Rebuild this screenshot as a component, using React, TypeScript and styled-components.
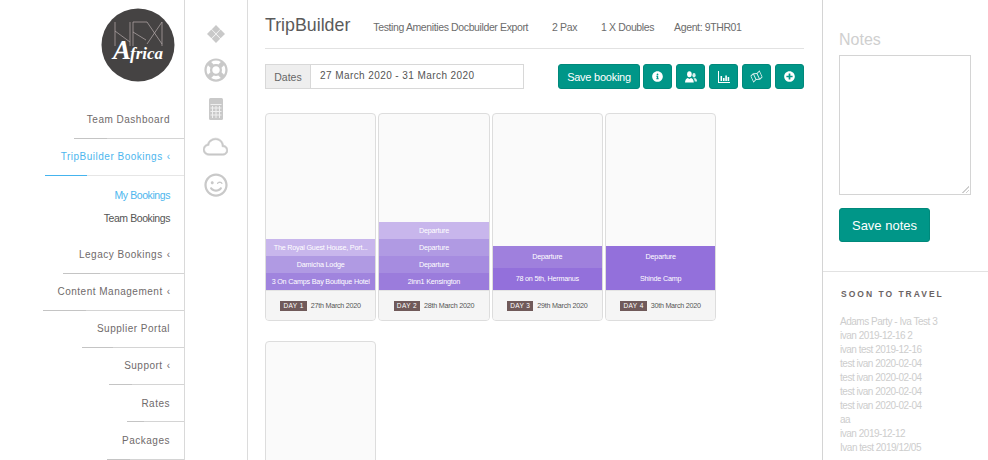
import React from 'react';
import styled, { createGlobalStyle } from 'styled-components';
import { FaInfoCircle, FaPlusCircle, FaRegLifeRing, FaRegMap, FaRegSmileWink } from 'react-icons/fa';
import { BsCloud } from 'react-icons/bs';

const Global = createGlobalStyle`
  html, body { margin: 0; padding: 0; background: #fff; }
  body { font-family: "Liberation Sans", Arial, sans-serif; overflow: hidden; }
  * { box-sizing: border-box; }
`;

const Page = styled.div`
  display: flex;
  width: 988px;
  height: 460px;
  overflow: hidden;
`;

const Sidebar = styled.aside`
  width: 185px;
  flex: none;
  border-right: 1px solid #d9d9d9;
  padding-top: 8px;
`;

const LogoWrap = styled.div`
  display: flex;
  justify-content: flex-end;
  padding-right: 9px;
  height: 93.5px;
`;

const NavList = styled.nav`
  display: flex;
  flex-direction: column;
`;

const NavItem = styled.div`
  height: 36.2px;
  padding: 11.5px 14px 0 0;
  font-size: 10px;
  line-height: 13px;
  letter-spacing: 0.5px;
  color: ${p => (p.$active ? '#4db6ee' : '#6f6a6a')};
  display: flex;
  justify-content: flex-end;
  gap: 4px;
`;

const Chevron = styled.span`
  letter-spacing: 0;
`;

const Rule = styled.div`
  height: 1px;
  background: ${p => (p.$active ? '#e6e6e6' : '#d4d4d4')};
  margin-left: ${p => p.$start}px;
  display: flex;
`;

const RuleLead = styled.span`
  display: block;
  height: 1px;
  width: ${p => p.$width}px;
  background: ${p => (p.$active ? '#45b4ee' : '#c4c4c4')};
`;

const SubNav = styled.div`
  display: flex;
  flex-direction: column;
  height: 60.5px;
  padding: 13px 14px 0 0;
  gap: 10px;
`;

const SubItem = styled.div`
  text-align: right;
  font-size: 10.5px;
  letter-spacing: -0.42px;
  line-height: 13px;
  color: ${p => (p.$active ? '#4db6ee' : '#555')};
`;

const IconRail = styled.div`
  width: 63px;
  flex: none;
  border-right: 1px solid #dcdcdc;
  display: flex;
  flex-direction: column;
  align-items: center;
  padding: 25px 1px 0 0;
  color: #c9c9c9;
`;

const RailSlot = styled.div`
  height: ${p => p.$height}px;
  margin-top: ${p => p.$top}px;
  display: flex;
  align-items: center;
  justify-content: center;
`;

const Main = styled.main`
  width: 575px;
  flex: none;
  padding: 0 18px 0 17px;
  border-right: 1px solid #d4d4d4;
`;

const Header = styled.header`
  height: 49px;
  display: flex;
  align-items: baseline;
  border-bottom: 1px solid #e2e2e2;
  padding-top: 15px;
  color: #6c6c6c;
  font-size: 10.5px;
  letter-spacing: -0.38px;
`;

const Title = styled.h1`
  margin: 0 23px 0 0;
  font-size: 17.8px;
  line-height: 20px;
  font-weight: 400;
  letter-spacing: 0;
  color: #5a5a5a;
`;

const Meta = styled.span`
  margin-right: ${p => p.$gap}px;
`;

const Toolbar = styled.div`
  display: flex;
  justify-content: space-between;
  margin-top: 15px;
  height: 25px;
`;

const DateGroup = styled.div`
  display: flex;
  width: 259px;
  height: 25px;
  border: 1px solid #d8d8d8;
`;

const DateLabel = styled.div`
  width: 45px;
  background: #eee;
  border-right: 1px solid #d8d8d8;
  font-size: 10.5px;
  color: #666;
  display: flex;
  align-items: center;
  justify-content: center;
`;

const DateValue = styled.div`
  flex: 1;
  padding-left: 9px;
  font-size: 10px;
  letter-spacing: 0.42px;
  line-height: 21px;
  color: #555;
`;

const Actions = styled.div`
  display: flex;
  gap: 4px;
`;

const ActionButton = styled.button`
  height: 25px;
  width: ${p => (p.$wide ? '82px' : '29px')};
  margin-right: ${p => (p.$wide ? '-1px' : '0')};
  padding: 0;
  border: 1px solid #00897b;
  border-radius: 3px;
  background: #009688;
  color: #fff;
  font-family: inherit;
  font-size: 11px;
  letter-spacing: -0.25px;
  display: flex;
  align-items: center;
  justify-content: center;
`;

const TiltedIcon = styled.span`
  display: flex;
  transform: rotate(-25deg);
  opacity: 0.85;
`;

const Grid = styled.div`
  display: grid;
  grid-template-columns: repeat(4, 111.33px);
  column-gap: 2px;
  row-gap: 20px;
  margin-top: 24px;
`;

const Card = styled.div`
  height: 208px;
  border: 1px solid #ddd;
  border-radius: 4px;
  background: #fafafa;
  display: flex;
  flex-direction: column;
  overflow: hidden;
`;

const Stack = styled.div`
  flex: 1;
  display: flex;
  flex-direction: column;
  justify-content: flex-end;
`;

const Stay = styled.div`
  height: ${p => p.$height}px;
  background: ${p => p.$color};
  color: #fff;
  font-size: 7.2px;
  letter-spacing: -0.2px;
  text-align: center;
  line-height: ${p => p.$line}px;
  white-space: nowrap;
`;

const CardFoot = styled.div`
  height: 30px;
  flex: none;
  background: #f5f5f5;
  border-top: 1px solid #e4e4e4;
  display: flex;
  align-items: center;
  justify-content: center;
  gap: 4px;
  font-size: 7.2px;
  letter-spacing: -0.25px;
  color: #555;
`;

const DayBadge = styled.span`
  background: #705a5a;
  color: #fff;
  font-size: 6.5px;
  line-height: 10px;
  padding: 0 3px;
  letter-spacing: 0.4px;
`;

const Aside = styled.aside`
  flex: 1;
  min-width: 0;
`;

const NotesBlock = styled.section`
  height: 272px;
  padding: 30px 17px 0 16px;
  border-bottom: 1px solid #e2e2e2;
`;

const NotesTitle = styled.h2`
  margin: 0 0 6px;
  font-size: 16px;
  line-height: 19px;
  font-weight: 400;
  color: #cfcfcf;
`;

const NotesArea = styled.textarea`
  display: block;
  width: 132px;
  height: 140px;
  border: 1px solid #d4d4d4;
  background: #fff;
  padding: 0;
  margin: 0;
  outline: none;
  &::-webkit-resizer {
    background: linear-gradient(135deg, transparent 0 50%, #cfcfcf 50% 60%, transparent 60% 75%, #cfcfcf 75% 85%, transparent 85%) right 1px bottom 1px / 7px 7px no-repeat;
  }
`;

const SaveNotes = styled.button`
  display: block;
  margin-top: 13px;
  width: 91px;
  height: 34px;
  border: 1px solid #00897b;
  border-radius: 3px;
  background: #009688;
  color: #fff;
  font-family: inherit;
  font-size: 13px;
  padding: 0;
`;

const Travel = styled.section`
  padding: 16px 0 0 17px;
`;

const TravelTitle = styled.h3`
  margin: 0 0 15px 1px;
  font-size: 8.5px;
  line-height: 12px;
  font-weight: 700;
  letter-spacing: 2px;
  color: #6b6363;
`;

const TravelList = styled.ul`
  margin: 0;
  padding: 0;
  list-style: none;
  font-size: 10px;
  letter-spacing: -0.48px;
  line-height: 14.05px;
  color: #cdcdcd;
`;

const Diamonds = () => (
  <svg width="18" height="18" viewBox="0 0 18 18" fill="currentColor">
    <path d="M9 0l4.2 4.2L9 8.4 4.8 4.2zM4.4 4.6L8.6 9l-4.2 4.2L0 9zM13.6 4.6L18 9l-4.4 4.2L9.4 9zM9 9.6l4.2 4.2L9 18l-4.2-4.2z" />
  </svg>
);

const Calculator = () => (
  <svg width="14" height="22" viewBox="0 0 14 22">
    <rect width="14" height="22" rx="1.5" fill="currentColor" />
    <path d="M1.5 6.5h11M1.5 10h11M1.5 13.5h11M1.5 17h11M3.5 8v12M7 8v12M10.5 8v12" stroke="#efefef" strokeWidth="1" />
  </svg>
);

const UsersIcon = () => (
  <svg width="12" height="12" viewBox="0 0 12 12" fill="#fff">
    <ellipse cx="4.4" cy="3.2" rx="2.3" ry="3" />
    <path d="M0 11.5c0-3 1.6-4.2 2.8-4.6l1.6 1 1.6-1C7.2 7.3 8.8 8.5 8.8 11.5z" />
    <ellipse cx="9" cy="4.2" rx="1.6" ry="2.2" opacity="0.85" />
    <path d="M8.3 7.2l.7.4 1-.5c1 .4 2 1.400 2 3.400H9.700c0-1.300-.5-2.600-1.400-3.300z" opacity="0.85" />
  </svg>
);

const BarsIcon = () => (
  <svg width="12" height="12" viewBox="0 0 12 12" fill="#fff">
    <path d="M0 0h1v11h11v1H0z" />
    <path d="M2.500 5h1.600v5H2.500zM5 7h1.600v3H5zM7.300 4.500h1.600V10H7.300zM9.600 6h1.600v4H9.600z" />
  </svg>
);

const Logo = () => (
  <svg width="74" height="74" viewBox="0 0 74 74">
    <circle cx="37" cy="37" r="36.500" fill="#454343" />
    <g stroke="#b8adad" strokeWidth="0.7" fill="none">
      <path d="M14 38V14M14 23l15 11M29 14v24M32 14h14M32 14v24M32 24l13 8M46 14l15 22M61 14L46 36M61 14v24" />
    </g>
    <text x="12" y="51" fontFamily="'Liberation Serif', serif" fontStyle="italic" fontWeight="700" fill="#fff">
      <tspan fontSize="27">A</tspan>
      <tspan fontSize="17" dx="-1">frica</tspan>
    </text>
  </svg>
);

const nav = [
  { label: 'Team Dashboard', start: 74, lead: 33 },
  { label: 'TripBuilder Bookings', start: 45, lead: 42, active: true, more: true, sub: true },
  { label: 'Legacy Bookings', start: 63, lead: 37, more: true },
  { label: 'Content Management', start: 43, lead: 43, more: true },
  { label: 'Supplier Portal', start: 82, lead: 31 },
  { label: 'Support', start: 109, lead: 23, more: true },
  { label: 'Rates', start: 127, lead: 17 },
  { label: 'Packages', start: 107, lead: 23 },
];

const days = [
  { n: 1, date: '27th March 2020', h: 17, stays: [['The Royal Guest House, Port...', '#c8b6ec'], ['Damicha Lodge', '#b09ae3'], ['3 On Camps Bay Boutique Hotel', '#a084de']] },
  { n: 2, date: '28th March 2020', h: 17, stays: [['Departure', '#c8b6ec'], ['Departure', '#b09ae3'], ['Departure', '#a68ce0'], ['2inn1 Kensington', '#9b7cdc']] },
  { n: 3, date: '29th March 2020', h: 22, stays: [['Departure', '#9f80dd'], ['78 on 5th, Hermanus', '#9370db']] },
  { n: 4, date: '30th March 2020', h: 22, stays: [['Departure', '#9370db'], ['Shinde Camp', '#9370db']] },
];

const travel = ['Adams Party - Iva Test 3', 'ivan 2019-12-16 2', 'ivan test 2019-12-16', 'test ivan 2020-02-04', 'test ivan 2020-02-04', 'test ivan 2020-02-04', 'test ivan 2020-02-04', 'aa', 'ivan 2019-12-12', 'Ivan test 2019/12/05'];

export default function App() {
  return (
    <Page>
      <Global />
      <Sidebar>
        <LogoWrap><Logo /></LogoWrap>
        <NavList>
          {nav.map(item => (
            <React.Fragment key={item.label}>
              <NavItem $active={item.active}>
                {item.label}
                {item.more && <Chevron>‹</Chevron>}
              </NavItem>
              <Rule $start={item.start} $active={item.active}><RuleLead $width={item.lead} $active={item.active} /></Rule>
              {item.sub && (
                <SubNav>
                  <SubItem $active>My Bookings</SubItem>
                  <SubItem>Team Bookings</SubItem>
                </SubNav>
              )}
            </React.Fragment>
          ))}
        </NavList>
      </Sidebar>
      <IconRail>
        <RailSlot $height={18} $top={0}><Diamonds /></RailSlot>
        <RailSlot $height={24} $top={15}><FaRegLifeRing size={24} /></RailSlot>
        <RailSlot $height={22} $top={16}><Calculator /></RailSlot>
        <RailSlot $height={17} $top={19}><BsCloud size={25} stroke="currentColor" strokeWidth={0.35} /></RailSlot>
        <RailSlot $height={24} $top={17}><FaRegSmileWink size={24} /></RailSlot>
      </IconRail>
      <Main>
        <Header>
          <Title>TripBuilder</Title>
          <Meta $gap={24}>Testing Amenities Docbuilder Export</Meta>
          <Meta $gap={24}>2 Pax</Meta>
          <Meta $gap={20}>1 X Doubles</Meta>
          <Meta $gap={0}>Agent: 9THR01</Meta>
        </Header>
        <Toolbar>
          <DateGroup>
            <DateLabel>Dates</DateLabel>
            <DateValue>27 March 2020 - 31 March 2020</DateValue>
          </DateGroup>
          <Actions>
            <ActionButton $wide>Save booking</ActionButton>
            <ActionButton><FaInfoCircle size={11} /></ActionButton>
            <ActionButton><UsersIcon /></ActionButton>
            <ActionButton><BarsIcon /></ActionButton>
            <ActionButton><TiltedIcon><FaRegMap size={11} /></TiltedIcon></ActionButton>
            <ActionButton><FaPlusCircle size={11} /></ActionButton>
          </Actions>
        </Toolbar>
        <Grid>
          {days.map(day => (
            <Card key={day.n}>
              <Stack>
                {day.stays.map(([name, color], i) => (
                  <Stay key={i} $height={day.h} $line={day.h} $color={color}>{name}</Stay>
                ))}
              </Stack>
              <CardFoot>
                <DayBadge>DAY {day.n}</DayBadge>
                {day.date}
              </CardFoot>
            </Card>
          ))}
          <Card />
        </Grid>
      </Main>
      <Aside>
        <NotesBlock>
          <NotesTitle>Notes</NotesTitle>
          <NotesArea />
          <SaveNotes>Save notes</SaveNotes>
        </NotesBlock>
        <Travel>
          <TravelTitle>SOON TO TRAVEL</TravelTitle>
          <TravelList>
            {travel.map((t, i) => <li key={i}>{t}</li>)}
          </TravelList>
        </Travel>
      </Aside>
    </Page>
  );
}
